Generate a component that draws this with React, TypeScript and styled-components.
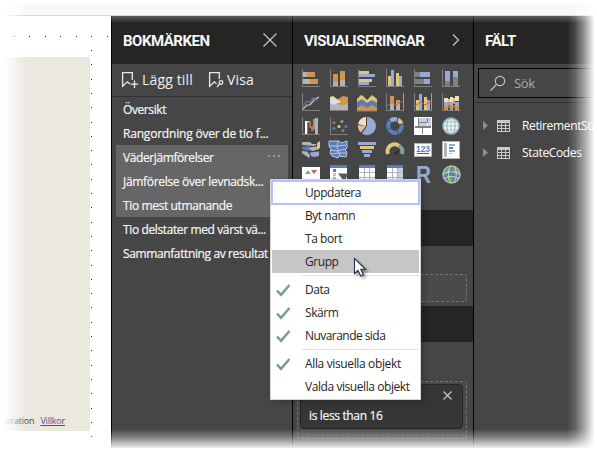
import React from "react";
import styled, { createGlobalStyle, css } from "styled-components";

const GlobalStyle = createGlobalStyle`
  * { box-sizing: border-box; }
  html, body { margin: 0; padding: 0; background: #fff; overflow: hidden; }
  body { font-family: "Open Sans", "Noto Sans", sans-serif; }
`;

const Page = styled.div`
  position: relative;
  width: 597px;
  height: 452px;
  overflow: hidden;
  background: #fff;
  padding: 4px 3px 4px 4px;
`;
const Ribbon = styled.div`
  height: 12px;
  background: linear-gradient(90deg, #fff 0, #f8f8f8 20px);
  border-bottom: 1px solid #d9d9d9;
`;
const Workspace = styled.div`
  display: flex;
  height: 432px;
`;
const Canvas = styled.div`
  width: 107px;
  padding-top: 41px;
  background: #fff;
`;
const ReportPage = styled.div`
  width: 86px;
  height: 374px;
  display: flex;
  align-items: flex-end;
  justify-content: flex-end;
  padding: 0 25px 3px 0;
  background: #ebe8e0;
  font-size: 9px;
  line-height: 14px;
  letter-spacing: -0.2px;
  color: #444;
  white-space: nowrap;
`;
const TermsLink = styled.a`
  margin-left: 6px;
  color: #4a4fa0;
  text-decoration: underline;
`;
const GridDots = styled.svg`
  position: absolute;
  left: 0;
  top: 0;
`;
const Panel = styled.section<{ $w: number }>`
  width: ${(p) => p.$w}px;
  flex: none;
  border-left: 1px solid #000;
  background: #464646;
  color: #fff;
  overflow: hidden;
`;
const PanelHeader = styled.header`
  height: 48px;
  display: flex;
  align-items: center;
  justify-content: space-between;
  padding: 0 13px 0 11px;
  background: #252525;
`;
const PanelTitle = styled.h2`
  margin: 1px 0 0;
  font: 700 15px/20px Roboto, sans-serif;
  letter-spacing: -0.5px;
  color: #f6f6f6;
`;
const Toolbar = styled.div`
  height: 33px;
  display: flex;
  align-items: center;
  padding-left: 9px;
  border-bottom: 1px solid #333;
`;
const ToolButton = styled.button<{ $w: number; $gap: number }>`
  display: flex;
  align-items: center;
  gap: ${(p) => p.$gap}px;
  width: ${(p) => p.$w}px;
  padding: 0;
  border: 0;
  background: none;
  color: #f0f0f0;
  font: 400 14px/18px "Open Sans", sans-serif;
  letter-spacing: 0.15px;
  white-space: nowrap;
`;
const BookmarkList = styled.ul`
  margin: 0 4px;
  padding: 0;
  list-style: none;
`;
const BookmarkRow = styled.li<{ $selected?: boolean; $ls: number }>`
  height: 24px;
  display: flex;
  align-items: center;
  justify-content: space-between;
  padding: 2px 7px 0;
  background: ${(p) => (p.$selected ? "#666" : "transparent")};
  font-size: 12px;
  line-height: 22px;
  letter-spacing: ${(p) => p.$ls}px;
  color: #f6f6f6;
  -webkit-text-stroke: 0.2px #f6f6f6;
  white-space: nowrap;
  svg { margin-top: -4px; }
`;
const VisualGrid = styled.div`
  display: grid;
  grid-template-columns: repeat(6, 28px);
  grid-auto-rows: 24px;
  height: 146px;
  padding: 5px 0 0 9px;
`;
const SectionBar = styled.div`
  height: 36px;
  background: #252525;
`;
const DropArea = styled.div<{ $h: number; $top: number; $bottom: number }>`
  height: ${(p) => p.$h}px;
  margin: ${(p) => p.$top}px 6px ${(p) => p.$bottom}px 4px;
  padding: 2px 3px;
  border: 1px dashed #737373;
  border-radius: 3px;
  background: #4a4a4a;
`;
const FilterCard = styled.div`
  height: 45px;
  margin-left: -1px;
  display: flex;
  flex-direction: column;
  justify-content: space-between;
  padding: 6px 10px 4px 8px;
  border: 1px solid #262626;
  border-radius: 4px;
  background: #363636;
  font-size: 12px;
  line-height: 17px;
  letter-spacing: -0.35px;
  color: #f6f6f6;
  -webkit-text-stroke: 0.2px #f6f6f6;
`;
const CardClose = styled.div`
  display: flex;
  justify-content: flex-end;
`;
const SearchBox = styled.div`
  height: 30px;
  margin: 4px 0 0 4px;
  display: flex;
  align-items: center;
  gap: 7px;
  padding-left: 10px;
  border: 1px solid #000;
  background: #464646;
  font-size: 13px;
  letter-spacing: -0.3px;
  color: #ababab;
`;
const TableList = styled.div`
  margin-top: 4px;
  padding-top: 9px;
  border-top: 1px solid #333;
`;
const TableRow = styled.div`
  height: 27px;
  display: flex;
  align-items: center;
  padding-left: 9px;
  font-size: 12px;
  line-height: 17px;
  letter-spacing: -0.35px;
  white-space: nowrap;
  svg { flex: none; }
  svg:last-of-type { margin: 1px 12px 0 9px; }
`;

const Menu = styled.div`
  position: absolute;
  left: 270px;
  top: 179px;
  width: 151px;
  height: 221px;
  padding: 0 1px;
  border: 1px solid #d4d4d4;
  background: #fff;
  color: #252525;
  box-shadow: 3px 2px 6px rgba(0, 0, 0, 0.22);
`;
const MenuItem = styled.div<{ $state?: "focus" | "hover"; $ls?: number }>`
  height: 23px;
  display: grid;
  grid-template-columns: 33px 1fr;
  align-items: center;
  font-size: 12px;
  line-height: 21px;
  padding-bottom: 1px;
  letter-spacing: ${(p) => p.$ls ?? -0.45}px;
  white-space: nowrap;
  svg { margin: 3px 0 0 4px; }
  ${(p) => p.$state === "hover" && css`background: #c6c6c6;`}
  ${(p) =>
    p.$state === "focus" &&
    css`
      height: 25px;
      margin: 0 -1px -1px;
      padding-left: 1px;
      box-shadow: inset 0 0 0 2px #b4c0fb;
    `}
`;
const MenuSeparator = styled.div`
  height: 1px;
  margin: 2px 0 2px 30px;
  background: #e0e0e0;
`;
const Pointer = styled.svg`
  position: absolute;
  left: 353px;
  top: 257px;
  filter: drop-shadow(2px 2px 1.5px rgba(0, 0, 0, 0.4));
`;
const Fade = styled.div<{ $side: "left" | "right" | "top" | "bottom" }>`
  position: absolute;
  pointer-events: none;
  ${(p) =>
    ({
      left: css`left: 0; top: 0; bottom: 0; width: 28px;
        background: linear-gradient(90deg, #fff 3px, rgba(255,255,255,.7) 11px, rgba(255,255,255,.25) 20px, rgba(255,255,255,0));`,
      right: css`right: 0; top: 0; bottom: 0; width: 30px;
        background: linear-gradient(90deg, rgba(255,255,255,0), rgba(255,255,255,.16) 8px, rgba(255,255,255,.5) 17px, rgba(255,255,255,.88) 25px, #fff 28px);`,
      top: css`left: 111px; right: 0; top: 16px; height: 7px;
        background: linear-gradient(rgba(255,255,255,.27), rgba(255,255,255,0));`,
      bottom: css`left: 0; right: 0; bottom: 0; height: 23px;
        background: linear-gradient(rgba(255,255,255,0), rgba(255,255,255,.3) 8px, rgba(255,255,255,.85) 18px, #fff 20px);`,
    })[p.$side]}
`;

type Box = [number, number, number, number, string];
const O = "#d4924a", Y = "#e0c57c", B = "#95aad5", D = "#5b7cb8", G = "#b4b4b4", K = "#808080", W = "#fff", R = "#c2654b", T = "#7ba594", P = "#e8bfa8";

const Boxes = ({ list }: { list: Box[] }) => (
  <g shapeRendering="crispEdges">
    {list.map(([x, y, width, height, fill], i) => (
      <rect key={i} {...{ x, y, width, height, fill }} />
    ))}
  </g>
);
const axes: Box[] = [[0, 0, 1, 18, K], [0, 17, 18, 1, K]];

const glyphs: React.ReactNode[] = [
  <Boxes list={[...axes, [1, 3, 4, 5, G], [5, 3, 8, 5, O], [1, 10, 7, 5, G], [8, 10, 8, 5, O]]} />,
  <Boxes list={[...axes, [3, 13, 5, 4, G], [3, 5, 5, 8, O], [10, 11, 5, 6, G], [10, 2, 5, 9, O]]} />,
  <Boxes list={[...axes, [1, 2, 10, 3, Y], [1, 5, 16, 3, B], [1, 10, 13, 3, Y], [1, 13, 10, 3, B]]} />,
  <Boxes list={[...axes, [2, 7, 3, 10, Y], [5, 1, 3, 16, B], [10, 4, 3, 13, Y], [13, 7, 3, 10, B]]} />,
  <Boxes list={[...axes, [1, 3, 5, 5, K], [6, 3, 10, 5, B], [1, 10, 9, 5, K], [10, 10, 6, 5, B]]} />,
  <Boxes list={[...axes, [3, 12, 5, 5, K], [3, 2, 5, 10, B], [11, 8, 5, 9, K], [11, 2, 5, 6, B]]} />,
  <>
    <Boxes list={axes} />
    <path d="M1 16L5 12H8L13 6L17 4" fill="none" stroke={P} strokeWidth="1.2" />
    <path d="M1 13L5 8L8 10L11 5L14 7L17 5" fill="none" stroke={D} strokeWidth="1.2" />
  </>,
  <>
    <path d="M8 6L13 3L18 4V17H8Z" fill={O} />
    <path d="M0 4L3 3L11 9L6 11L0 8Z" fill="#f0dca8" />
    <path d="M0 9L5 8L11 13L18 10V17H0Z" fill={G} />
    <path d="M0 7L5 6L9 9L4 12L0 10Z" fill="#d9e0ea" />
    <path d="M0 17.5H18" stroke={K} />
  </>,
  <>
    <path d="M-1 6L3 2L5 3L9 7L14 2L19 6V18H-1Z" fill={Y} />
    <path d="M-1 9L4 6L9 10L14 7L19 10V18H-1Z" fill={D} />
    <path d="M-1 15L4 12L9 15L14 12L19 15V18H-1Z" fill={O} />
    <path d="M-1 18H19" stroke={K} />
  </>,
  <>
    <Boxes list={[...axes, [17, 0, 1, 17, O], [4, 3, 4, 6, O], [4, 9, 4, 8, G], [10, 7, 4, 3, O], [10, 10, 4, 7, G]]} />
    <path d="M1 13L6 9L10 12L17 8" fill="none" stroke={R} />
  </>,
  <>
    <Boxes list={[...axes, [17, 0, 1, 17, O], [2, 7, 3, 10, Y], [5, 1, 3, 16, B], [10, 4, 3, 13, Y], [13, 7, 3, 10, B]]} />
    <path d="M1 13L7 9L11 12L17 8" fill="none" stroke={R} />
  </>,
  <Boxes list={[[2, 5, 4, 5, "#f1e3c2"], [8, 4, 3, 5, "#f1e3c2"], [13, 3, 4, 5, "#f1e3c2"], [6, 6, 2, 3, Y], [11, 5, 2, 3, Y], [2, 9, 4, 4, B], [8, 9, 3, 4, B], [13, 9, 4, 4, B], [6, 9, 2, 3, O], [11, 8, 2, 3, O], [2, 13, 4, 4, O], [8, 13, 3, 4, O], [13, 13, 4, 4, O], [6, 12, 2, 3, D], [11, 12, 2, 3, D], ...axes]} />,
  <Boxes list={[...axes, [3, 4, 2, 13, W], [5, 4, 2, 2, G], [7, 4, 2, 7, R], [9, 9, 3, 5, R], [11, 2, 2, 10, T], [13, 1, 3, 16, G], [5, 7, 1, 10, K]]} />,
  <>
    <Boxes list={axes} />
    {[[4, 5.5, R], [12, 4.5, T], [4, 11.5, D], [9, 9.5, Y], [16, 9.5, D], [13, 13.5, K]].map(([x, y, c]) => (
      <circle key={`${x}-${y}`} cx={x} cy={y} r="1.6" fill={String(c)} />
    ))}
  </>,
  <>
    <path d="M9 9V0A9 9 0 1 1 4 16.5Z" fill={B} />
    <path d="M8 9L0 7A8.5 8.5 0 0 1 8 0Z" fill="#f0dfb9" />
    <path d="M8 9L3 15.5A8.5 8.5 0 0 1 0 8Z" fill="#e2b7a6" />
  </>,
  <>
    <circle cx="9" cy="9" r="6.8" fill="none" stroke={D} strokeWidth="4.2" />
    <path d="M4.5 3.9A6.8 6.8 0 0 1 11 2.5" fill="none" stroke={B} strokeWidth="4.2" />
    <path d="M12 2.9A6.8 6.8 0 0 1 15.3 6.5" fill="none" stroke={Y} strokeWidth="4.2" />
    <path d="M11.5 0V5M18 7L13 8M2 2L6 6M1 13L5 11M12 17L11 13" stroke="#464646" strokeWidth=".8" />
  </>,
  <Boxes list={[[0, 0, 18, 18, W], [4, 1, 1, 8, K], [5, 1, 8, 4, "#c6d0e5"], [13, 1, 1, 5, K], [14, 1, 3, 8, "#c6d0e5"], [5, 6, 8, 3, "#c6d0e5"], [5, 5, 8, 1, K], [1, 9, 16, 2, K], [8, 10, 1, 7, K]]} />,
  <>
    <circle cx="9" cy="9" r="8" fill="#f4f8fa" stroke={B} strokeWidth="1.6" />
    <path d="M9 1V17M1 9H17M2.5 5H15.5M2.5 13H15.5" stroke="#a5c4ba" />
    <ellipse cx="9" cy="9" rx="4.2" ry="8" fill="none" stroke="#8fb5a8" />
  </>,
  <>
    <path d="M0 1H8L10 3H14V4L12 5L7 4.5L0 4Z" fill={G} />
    <path d="M0 6L7 5L9 8L6 10L0 8Z" fill={D} />
    <path d="M7 6.5L15 5.5L16 8L11 10L8 9Z" fill={G} />
    <path d="M0 10L5 10.5L8 14L7 17L4 15L0 12Z" fill={G} />
    <path d="M8 11.5L17 10.5V15L12 16L9 15Z" fill={B} />
    <path d="M18 0L15 2V9L18 7Z" fill={Y} />
  </>,
  <>
    <path d="M-1 0H9L11 2L17 0V7L15 9L17 11L16 16L9 15L8 17L2 15L0 12L1 8L-1 5Z" fill={D} stroke="#b7c7e5" />
    <path d="M0 5H8L16 4M1 9L7 10L15 8M8 0L7 6L10 15M1 13L9 12L16 12" stroke="#b7c7e5" fill="none" />
  </>,
  <Boxes list={[[0, 1, 18, 3, B], [2, 5, 14, 3, Y], [4, 9, 10, 3, B], [6, 13, 6, 3, B]]} />,
  <>
    <path d="M2 13A7 7 0 0 1 13 5" fill="none" stroke={Y} strokeWidth="4" />
    <path d="M13 5A7 7 0 0 1 16 13" fill="none" stroke={T} strokeWidth="4" />
    <path d="M8 13L14 7L10 14Z" fill="#242424" />
  </>,
  <>
    <rect x=".5" y="2.5" width="17" height="13" fill="#fff" stroke={G} />
    <text x="9" y="10.5" textAnchor="middle" fontFamily="Liberation Sans" fontWeight="700" fontSize="8.5" fill={D}>123</text>
    <path d="M3 12.5H15" stroke="#555" />
  </>,
  <Boxes list={[[0, 0, 18, 18, G], [1, 1, 16, 16, "#fff"], [2, 2, 3, 14, G], [7, 3, 6, 2, B], [7, 6, 4, 2, D], [7, 9, 6, 2, B], [7, 12, 3, 1, G]]} />,
  <>
    <Boxes list={[[0, 2, 18, 16, W]]} />
    <path d="M3 9L6 5L9 9Z" fill={T} /><path d="M9 5H15L12 9Z" fill={R} />
  </>,
  <>
    <Boxes list={[[0, 0, 17, 18, W], [0, 0, 17, 3, D], [3, 4, 3, 3, D], [3, 8, 3, 3, Y], [3, 12, 3, 3, G]]} />
    <path d="M8 8.5H19L16 13V18H12V13.5Z" fill="#5a5a5a" />
  </>,
  <Boxes list={[[1, 0, 16, 18, W], [1, 0, 16, 3, D], [6, 3, 1, 15, G], [11, 3, 1, 15, G], [1, 7, 16, 1, G], [1, 12, 16, 1, G]]} />,
  <Boxes list={[[1, 0, 16, 18, W], [1, 0, 16, 3, D], [12, 3, 5, 15, "#c6d0e5"], [6, 3, 1, 15, G], [11, 3, 1, 15, G], [1, 7, 16, 1, G], [1, 12, 16, 1, G]]} />,
  <text x="2" y="17.5" fontFamily="Liberation Sans" fontWeight="700" fontSize="24" textLength="15" lengthAdjust="spacingAndGlyphs" fill={B}>R</text>,
  <>
    <circle cx="9.5" cy="9.5" r="8.5" fill="#5b7fa5" stroke={G} strokeWidth="1.6" />
    <path d="M3 6L7 2L9 4L7 8L3 10ZM11 3L15 4L17 8L14 10L11 7ZM5 12L10 11L12 14L9 17L6 16Z" fill="#6fa557" />
    <path d="M1 9C6 6 13 6 18 9M2 14C7 10 12 11 17 14M9 1C5 6 6 13 9 18M12 1C15 6 15 12 12 18" stroke="#dfe6e8" fill="none" strokeWidth=".8" />
  </>,
];

const Cross = ({ size, color }: { size: number; color: string }) => (
  <svg width={size} height={size} viewBox={`0 0 ${size} ${size}`}>
    <path d={`M.5 .5L${size - 0.5} ${size - 0.5}M${size - 0.5} .5L.5 ${size - 0.5}`} stroke={color} strokeWidth="1.2" />
  </svg>
);
const BookmarkIcon = ({ kind }: { kind: "add" | "view" }) => (
  <svg width="18" height="18" viewBox="0 0 18 18" fill="none" stroke="#e8e8e8" strokeWidth="1.3">
    {kind === "add" ? (
      <path d="M11.3 9V1.6H1.6V15.3L6.4 10.8L9 13M13.5 9.5V17M9.7 13.2H17.3" />
    ) : (
      <>
        <path d="M11.3 8V1.6H1.6V15.3L6.4 10.8L8.5 12.7M9 16L11.5 13" />
        <circle cx="13" cy="11.5" r="1.8" />
      </>
    )}
  </svg>
);
const Check = () => (
  <svg width="15" height="13" viewBox="0 0 15 13">
    <path d="M1 6.5L5 10.8L13.5 1" fill="none" stroke="#769e90" strokeWidth="2.5" />
  </svg>
);

const bookmarks = [
  { name: "Översikt", ls: -0.4 },
  { name: "Rangordning över de tio f...", ls: -0.2 },
  { name: "Väderjämförelser", selected: true, more: true, ls: -0.4 },
  { name: "Jämförelse över levnadsk...", selected: true, ls: -0.32 },
  { name: "Tio mest utmanande", selected: true, ls: -0.37 },
  { name: "Tio delstater med värst vä...", ls: -0.38 },
  { name: "Sammanfattning av resultat", ls: -0.38 },
];
const tables = ["RetirementStats", "StateCodes"];
const cellGrid: Box[] = [3, 6, 9].flatMap((y) => [1, 5, 9].map((x): Box => [x, y, 3, 2, "#464646"]));
const dotsX = [14, 29, 45, 60, 76, 91, 107];
const dotsY = Array.from({ length: 28 }, (_, i) => Math.round(50 + i * 14.3));

export default function App() {
  return (
    <Page>
      <GlobalStyle />
      <Ribbon />
      <Workspace>
        <Canvas>
          <ReportPage>
            <span>poration</span>
            <TermsLink>Villkor</TermsLink>
          </ReportPage>
        </Canvas>
        <Panel $w={181}>
          <PanelHeader>
            <PanelTitle>BOKMÄRKEN</PanelTitle>
            <svg width="18" height="14" viewBox="0 0 18 14">
              <path d="M2.5 .5L15.5 13.5M15.5 .5L2.5 13.5" stroke="#c4c4c4" strokeWidth="1.2" />
            </svg>
          </PanelHeader>
          <Toolbar>
            <ToolButton $w={87} $gap={3}><BookmarkIcon kind="add" />Lägg till</ToolButton>
            <ToolButton $w={60} $gap={1}><BookmarkIcon kind="view" />Visa</ToolButton>
          </Toolbar>
          <BookmarkList>
            {bookmarks.map((b) => (
              <BookmarkRow key={b.name} $selected={b.selected} $ls={b.ls}>
                {b.name}
                {b.more && (
                  <svg width="13" height="3" fill="#9a9a9a" shapeRendering="crispEdges">
                    <path d="M0 0h2v2H0zM5 0h2v2H5zM10 0h2v2h-2z" />
                  </svg>
                )}
              </BookmarkRow>
            ))}
          </BookmarkList>
        </Panel>
        <Panel $w={181}>
          <PanelHeader>
            <PanelTitle>VISUALISERINGAR</PanelTitle>
            <svg width="8" height="12" viewBox="0 0 8 12">
              <path d="M1 .5L6.5 6L1 11.5" fill="none" stroke="#c4c4c4" strokeWidth="1.3" />
            </svg>
          </PanelHeader>
          <VisualGrid>
            {glyphs.map((g, i) => (
              <svg key={i} width="18" height="18" viewBox="0 0 18 18" overflow="visible">{g}</svg>
            ))}
          </VisualGrid>
          <SectionBar />
          <DropArea $h={28} $top={28} $bottom={4} />
          <SectionBar />
          <DropArea $h={58} $top={39} $bottom={0}>
            <FilterCard>
              <CardClose><Cross size={9} color="#c4c4c4" /></CardClose>
              <span>is less than 16</span>
            </FilterCard>
          </DropArea>
        </Panel>
        <Panel $w={121}>
          <PanelHeader>
            <PanelTitle>FÄLT</PanelTitle>
          </PanelHeader>
          <SearchBox>
            <svg width="18" height="17" viewBox="0 0 18 17" fill="none" stroke="#bcbcbc" strokeWidth="1.2">
              <circle cx="11" cy="6" r="4.7" />
              <path d="M7.5 9.5L1.5 15.5" />
            </svg>
            Sök
          </SearchBox>
          <TableList>
            {tables.map((name) => (
              <TableRow key={name}>
                <svg width="5" height="9"><path d="M0 0L5 4.5L0 9Z" fill="#8c8c8c" /></svg>
                <svg width="13" height="12">
                  <Boxes list={[[0, 0, 13, 12, "#c9c9c9"], ...cellGrid]} />
                </svg>
                {name}
              </TableRow>
            ))}
          </TableList>
        </Panel>
      </Workspace>
      <GridDots width="111" height="452" fill="#222" shapeRendering="crispEdges">
        {dotsX.map((x) => <rect key={x} x={x} y="36" width="1" height="1" />)}
        {dotsY.map((y) => <rect key={y} x="91" y={y} width="1" height="1" />)}
      </GridDots>
      <Fade $side="top" />
      <Fade $side="left" />
      <Fade $side="right" />
      <Fade $side="bottom" />
      <Menu>
        <MenuItem $state="focus"><i />Uppdatera</MenuItem>
        <MenuItem><i />Byt namn</MenuItem>
        <MenuItem><i />Ta bort</MenuItem>
        <MenuItem $state="hover"><i />Grupp</MenuItem>
        <MenuSeparator />
        <MenuItem><Check />Data</MenuItem>
        <MenuItem><Check />Skärm</MenuItem>
        <MenuItem $ls={-0.55}><Check />Nuvarande sida</MenuItem>
        <MenuSeparator />
        <MenuItem $ls={-0.36}><Check />Alla visuella objekt</MenuItem>
        <MenuItem $ls={-0.43}><i />Valda visuella objekt</MenuItem>
      </Menu>
      <Pointer width="16" height="22" viewBox="0 0 16 22">
        <path d="M1.5 1.5V16.5L5 13.5L7.7 19L10.3 17.8L7.8 12.3H12.5Z" fill="#fff" stroke="#25304a" strokeWidth="1.1" />
      </Pointer>
    </Page>
  );
}
